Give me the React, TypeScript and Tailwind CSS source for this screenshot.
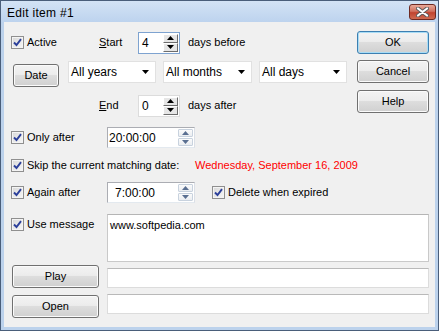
import React from "react";

function Check({ className = "" }: { className?: string }) {
  return (
    <span
      className={
        "inline-flex w-[13px] h-[13px] shrink-0 items-center justify-center border border-[#8f8f8f] bg-[linear-gradient(135deg,#d8d8d8,#f7f7f7)] shadow-[inset_0_0_0_1px_#f4f4f4] " +
        className
      }
    >
      <svg width="9" height="9" viewBox="0 0 9 9">
        <path d="M1 4.5 L3.5 7 L8 1.2" stroke="#2b3f9a" strokeWidth="1.9" fill="none" />
      </svg>
    </span>
  );
}

function Btn({
  children,
  className = "",
  primary = false,
}: {
  children: React.ReactNode;
  className?: string;
  primary?: boolean;
}) {
  return (
    <button
      className={
        "h-[23px] rounded-[3px] border text-[11px] leading-none text-black bg-[linear-gradient(#f3f3f3,#ececec_45%,#dddddd_50%,#d0d0d0)] " +
        (primary
          ? "border-[#3c7fb1] shadow-[inset_0_0_0_1px_#a8dcf5] "
          : "border-[#707070] shadow-[inset_0_0_0_1px_#fbfbfb] ") +
        className
      }
    >
      {children}
    </button>
  );
}

function Tri({ up, color }: { up: boolean; color: string }) {
  return (
    <svg width="7" height="4" viewBox="0 0 7 4">
      <path d={up ? "M0 4 L3.5 0 L7 4 Z" : "M0 0 L3.5 4 L7 0 Z"} fill={color} />
    </svg>
  );
}

function ClassicSpin({ value, focused }: { value: string; focused?: boolean }) {
  return (
    <div
      className={
        "w-[42px] h-[22px] bg-white border flex items-center pl-[3px] pr-[1px] " +
        (focused ? "border-[#7ea3d0]" : "border-[#dcdcdc]")
      }
    >
      <span className="flex-1 text-[12px] leading-none">{value}</span>
      <div className="flex flex-col w-[15px] h-[18px]">
        {[true, false].map((up) => (
          <div
            key={String(up)}
            className="flex-1 flex items-center justify-center bg-[#e6e6e6] border border-t-white border-l-white border-r-[#6d6d6d] border-b-[#6d6d6d]"
          >
            <Tri up={up} color="#000" />
          </div>
        ))}
      </div>
    </div>
  );
}

function TimeBox({ value, indent = "" }: { value: string; indent?: string }) {
  return (
    <div className="w-[88px] h-[21px] bg-white border border-[#abadb3] border-b-[#e3e9ef] border-r-[#dbdfe6] flex items-center pl-[1px] pr-[1px]">
      <span className={"flex-1 text-[12px] leading-none " + indent}>{value}</span>
      <div className="flex flex-col w-[15px] h-[17px] gap-[1px]">
        {[true, false].map((up) => (
          <div
            key={String(up)}
            className="flex-1 flex items-center justify-center rounded-[1px] border border-[#c8d2de] bg-[linear-gradient(#fbfbfb,#eaedf1)]"
          >
            <Tri up={up} color="#5a6f91" />
          </div>
        ))}
      </div>
    </div>
  );
}

function Combo({ label, className = "" }: { label: string; className?: string }) {
  return (
    <div
      className={
        "h-[22px] bg-white border border-[#e1e1e1] flex items-center pl-[2px] pr-[6px] " + className
      }
    >
      <span className="flex-1 text-[12px] leading-none">{label}</span>
      <Tri up={false} color="#000" />
    </div>
  );
}

export default function App() {
  return (
    <div className="w-[441px] h-[331px] bg-white font-['Liberation_Sans',Arial,sans-serif] text-black">
      <div className="w-[439px] h-[331px] border border-[#4a5e7a] bg-[#bcd2ec] flex flex-col px-[3px] pb-[3px]">
        {/* title bar */}
        <div className="-mx-[3px] h-[21px] shrink-0 flex items-center pl-[6px] pr-[2px] bg-[linear-gradient(#d3e3f5,#bdd3ee)]">
          <span className="flex-1 text-[12px] pt-[2px] tracking-[0.3px]">Edit item #1</span>
          <div className="w-[27px] h-[16px] mt-[1px] rounded-[3px] border border-[#6e2a22] bg-[linear-gradient(#e9a999,#d0705e_45%,#c0432f_55%,#cf6a50)] flex items-center justify-center">
            <svg width="13" height="10" viewBox="0 0 13 10">
              <path d="M2 1.5 L11 8.5 M11 1.5 L2 8.5" stroke="#5b5b5b" strokeWidth="4" strokeLinecap="round" />
              <path d="M2 1.5 L11 8.5 M11 1.5 L2 8.5" stroke="#ffffff" strokeWidth="2.2" strokeLinecap="round" />
            </svg>
          </div>
        </div>

        {/* client area */}
        <div className="flex-1 bg-[#f0f0f0] flex flex-col pl-[7px] pr-[6px] pt-[9px] text-[11px]">
          {/* row 1 */}
          <div className="flex items-center h-[23px]">
            <label className="w-[88px] flex items-center gap-[3px]">
              <Check />
              <span>Active</span>
            </label>
            <span className="w-[39px]">
              <span className="underline">S</span>tart
            </span>
            <ClassicSpin value="4" focused />
            <span className="ml-[8px]">days before</span>
            <Btn primary className="ml-auto w-[72px]">
              OK
            </Btn>
          </div>

          {/* row 2 */}
          <div className="flex items-start h-[27px] mt-[6px]">
            <Btn className="ml-[2px] mt-[4px] w-[46px]">Date</Btn>
            <Combo label="All years" className="ml-[9px] mt-[1px] w-[88px]" />
            <Combo label="All months" className="ml-[7px] mt-[1px] w-[89px]" />
            <Combo label="All days" className="ml-[7px] mt-[1px] w-[88px]" />
            <Btn className="ml-auto w-[72px]">Cancel</Btn>
          </div>

          {/* row 3 */}
          <div className="flex items-start h-[26px] mt-[3px]">
            <div className="flex items-center h-[21px] mt-[5px] pl-[88px]">
              <span className="w-[39px]">
                <span className="underline">E</span>nd
              </span>
              <ClassicSpin value="0" />
              <span className="ml-[8px]">days after</span>
            </div>
            <Btn className="ml-auto w-[72px] h-[22px]">Help</Btn>
          </div>

          {/* only after */}
          <div className="flex items-center h-[21px] mt-[11px]">
            <label className="w-[96px] flex items-center gap-[3px]">
              <Check />
              <span>Only after</span>
            </label>
            <TimeBox value="20:00:00" />
          </div>

          {/* skip */}
          <div className="flex items-center h-[20px] mt-[7px]">
            <label className="w-[184px] flex items-center gap-[3px]">
              <Check />
              <span>Skip the current matching date:</span>
            </label>
            <span className="text-[#ff0000] text-[11px]">Wednesday, September 16, 2009</span>
          </div>

          {/* again after */}
          <div className="flex items-center h-[21px] mt-[7px]">
            <label className="w-[96px] flex items-center gap-[3px]">
              <Check />
              <span>Again after</span>
            </label>
            <TimeBox value="7:00:00" indent="pl-[6px]" />
            <label className="ml-[17px] flex items-center gap-[3px]">
              <Check />
              <span>Delete when expired</span>
            </label>
          </div>

          {/* use message */}
          <div className="flex items-start mt-[11px]">
            <label className="w-[96px] flex items-center gap-[3px] mt-[2px]">
              <Check />
              <span>Use message</span>
            </label>
            <div className="flex-1 h-[48px] bg-white border border-[#c9c9c9] border-t-[#b5b5b5] px-[2px] pt-[5px] text-[11px] leading-none">
              www.softpedia.com
            </div>
          </div>

          {/* play */}
          <div className="flex items-start mt-[3px]">
            <Btn className="ml-[1px] w-[87px]">Play</Btn>
            <div className="flex-1 ml-[8px] mt-[3px] h-[20px] bg-white border border-[#dcdcdc] border-t-[#b9b9b9]" />
          </div>

          {/* open */}
          <div className="flex items-start mt-[6px]">
            <Btn className="ml-[1px] mt-[1px] w-[87px]">Open</Btn>
            <div className="flex-1 ml-[8px] h-[20px] bg-white border border-[#dcdcdc] border-t-[#b9b9b9]" />
          </div>
        </div>
      </div>
    </div>
  );
}
